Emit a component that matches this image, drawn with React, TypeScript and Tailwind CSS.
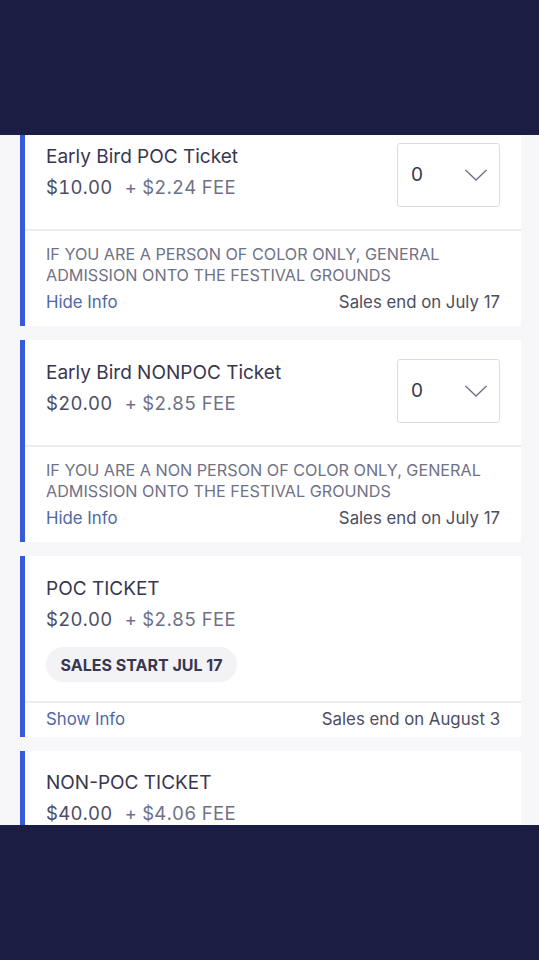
import React from "react";

const font = { fontFamily: "Inter, Roboto, 'Liberation Sans', sans-serif" };

function Select() {
  return (
    <div className="flex h-[64px] w-[103px] shrink-0 items-center justify-between rounded-[3px] border border-[#dcdbe3] bg-white pl-[13px] pr-[11px]">
      <span className="text-[19px] text-[#39364f]">0</span>
      <svg width="24" height="14" viewBox="0 0 24 14" fill="none">
        <path d="M1.5 2 L12 12 L22.5 2" stroke="#6f7287" strokeWidth="1.4" />
      </svg>
    </div>
  );
}

function Price({ price, fee }: { price: string; fee: string }) {
  return (
    <div className="mt-[6px] flex h-[24px] items-center text-[18.5px] leading-[24px] tabular-nums tracking-[0.3px]">
      <span className="text-[#4b4d63]">{price}</span>
      <span className="ml-[12px] text-[#6f7287]">+ {fee} FEE</span>
    </div>
  );
}

function Card({
  title,
  price,
  fee,
  select,
  badge,
  desc,
  link,
  ends,
  top,
  cut,
}: {
  title: string;
  price: string;
  fee: string;
  select?: boolean;
  badge?: string;
  desc?: string[];
  link?: string;
  ends?: string;
  top: string;
  cut?: boolean;
}) {
  return (
    <div className="ml-[20px] flex w-[501px] border-l-[5px] border-[#3859dc] bg-white">
      <div className="flex flex-1 flex-col">
        <div className={`flex justify-between pl-[21px] pr-[21px] ${top}`}>
          <div className="flex flex-col">
            <div className="h-[24px] text-[19px] leading-[24px] text-[#39364f]">{title}</div>
            <Price price={price} fee={fee} />
            {badge && (
              <div className="mt-[16px] flex h-[35px] w-[191px] items-center justify-center rounded-full bg-[#f3f3f6] text-[16px] font-bold text-[#39364f]">
                {badge}
              </div>
            )}
          </div>
          {select && (
            <div className="mt-[-2px]">
              <Select />
            </div>
          )}
        </div>
        {!cut && (
          <div className="border-t-2 border-[#ececf0]">
            {desc ? (
              <div className="pl-[21px] pr-[21px] pt-[13px] pb-[11px]">
                <div className="text-[16.2px] leading-[21px] text-[#6f7287]">
                  {desc.map((d) => (
                    <div key={d}>{d}</div>
                  ))}
                </div>
                <div className="mt-[5px] flex h-[24px] items-center justify-between text-[16.8px]">
                  <span className="text-[#4f69a6]">{link}</span>
                  <span className="text-[#4b4d63]">{ends}</span>
                </div>
              </div>
            ) : (
              <div className="flex h-[34px] items-center justify-between pl-[21px] pr-[21px] text-[16.8px]">
                <span className="text-[#4f69a6]">{link}</span>
                <span className="text-[#4b4d63]">{ends}</span>
              </div>
            )}
          </div>
        )}
      </div>
    </div>
  );
}

export default function App() {
  return (
    <div className="flex h-[960px] w-[539px] flex-col bg-[#1b1d42]" style={font}>
      <div className="h-[135px] shrink-0" />
      <div className="h-[690px] shrink-0 overflow-hidden bg-[#f7f7f9]">
        <div className="mt-[-11px] flex flex-col gap-[14px]">
          <Card
            title="Early Bird POC Ticket"
            price="$10.00"
            fee="$2.24"
            select
            top="pt-[21px] pb-[22px]"
            desc={["IF YOU ARE A PERSON OF COLOR ONLY, GENERAL", "ADMISSION ONTO THE FESTIVAL GROUNDS"]}
            link="Hide Info"
            ends="Sales end on July 17"
          />
          <Card
            title="Early Bird NONPOC Ticket"
            price="$20.00"
            fee="$2.85"
            select
            top="pt-[21px] pb-[22px]"
            desc={["IF YOU ARE A NON PERSON OF COLOR ONLY, GENERAL", "ADMISSION ONTO THE FESTIVAL GROUNDS"]}
            link="Hide Info"
            ends="Sales end on July 17"
          />
          <Card
            title="POC TICKET"
            price="$20.00"
            fee="$2.85"
            badge="SALES START JUL 17"
            top="pt-[21px] pb-[19px]"
            link="Show Info"
            ends="Sales end on August 3"
          />
          <Card
            title="NON-POC TICKET"
            price="$40.00"
            fee="$4.06"
            top="pt-[20px] pb-[30px]"
            cut
          />
        </div>
      </div>
      <div className="flex-1" />
    </div>
  );
}
